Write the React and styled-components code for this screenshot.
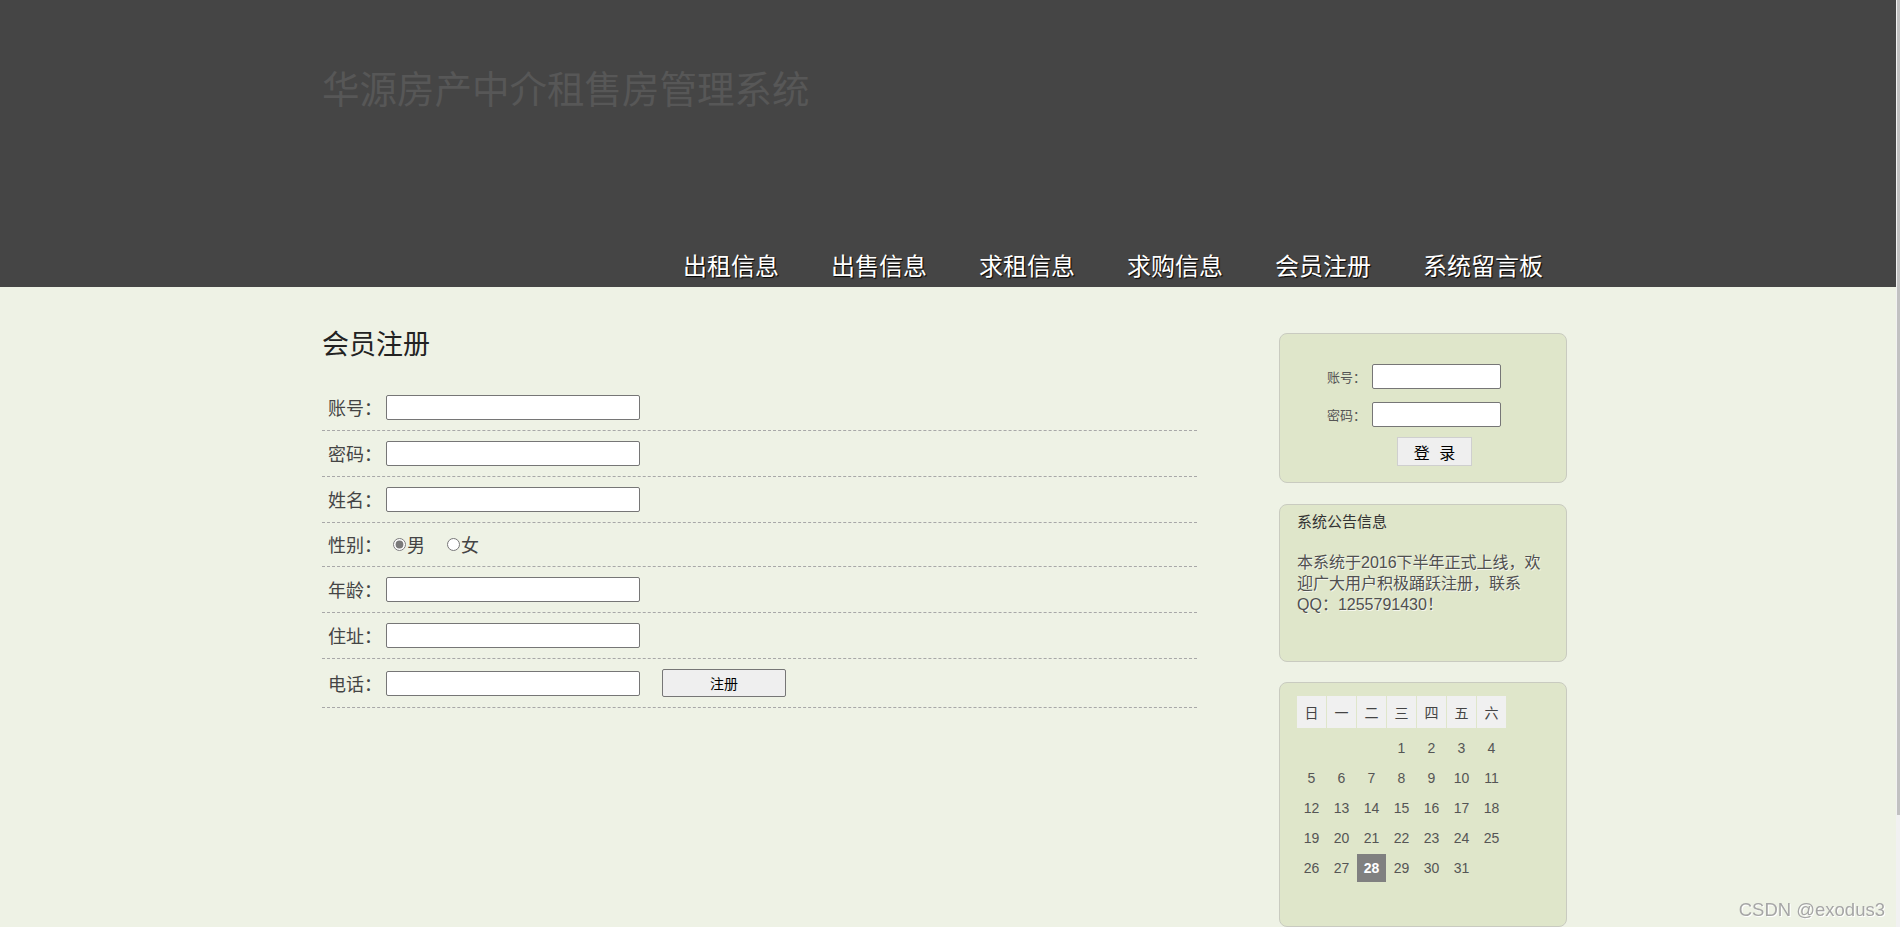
import styled, { createGlobalStyle } from "styled-components";

const CJK = `"Noto Sans CJK SC", "Liberation Sans", sans-serif`;
const MIXED = `"Liberation Sans", "Noto Sans CJK SC", sans-serif`;

const navItems = ["出租信息", "出售信息", "求租信息", "求购信息", "会员注册", "系统留言板"];
const weekDays = ["日", "一", "二", "三", "四", "五", "六"];
const firstWeekday = 3;
const today = 28;

export default function App() {
  const days = [];
  for (let i = 0; i < firstWeekday; i++) days.push(null);
  for (let d = 1; d <= 31; d++) days.push(d);

  return (
    <>
      <GlobalStyle />
      <Header>
        <HeaderInner>
          <SiteTitle>华源房产中介租售房管理系统</SiteTitle>
          <Nav>
            {navItems.map((item) => (
              <NavLink key={item} href="#">
                {item}
              </NavLink>
            ))}
          </Nav>
        </HeaderInner>
      </Header>

      <Content>
        <Main>
          <PageTitle>会员注册</PageTitle>
          <FormRow>
            <Label>账号：</Label>
            <TextInput type="text" />
          </FormRow>
          <FormRow>
            <Label>密码：</Label>
            <TextInput type="password" />
          </FormRow>
          <FormRow>
            <Label>姓名：</Label>
            <TextInput type="text" />
          </FormRow>
          <FormRow>
            <Label>性别：</Label>
            <Radio type="radio" name="sex" defaultChecked $first />
            <RadioText>男</RadioText>
            <Radio type="radio" name="sex" />
            <RadioText>女</RadioText>
          </FormRow>
          <FormRow>
            <Label>年龄：</Label>
            <TextInput type="text" />
          </FormRow>
          <FormRow>
            <Label>住址：</Label>
            <TextInput type="text" />
          </FormRow>
          <FormRow>
            <Label>电话：</Label>
            <TextInput type="text" />
            <SubmitButton type="button">注册</SubmitButton>
          </FormRow>
        </Main>

        <Sidebar>
          <LoginBox>
            <LoginRow>
              <SmallLabel>账号：</SmallLabel>
              <SmallInput type="text" />
            </LoginRow>
            <LoginRow>
              <SmallLabel>密码：</SmallLabel>
              <SmallInput type="password" />
            </LoginRow>
            <LoginActions>
              <LoginButton type="button">登 录</LoginButton>
            </LoginActions>
          </LoginBox>

          <NoticeBox>
            <NoticeTitle>系统公告信息</NoticeTitle>
            <NoticeText>本系统于2016下半年正式上线，欢迎广大用户积极踊跃注册，联系QQ：1255791430！</NoticeText>
          </NoticeBox>

          <CalendarBox>
            <WeekHeader>
              {weekDays.map((w) => (
                <WeekCell key={w}>{w}</WeekCell>
              ))}
            </WeekHeader>
            <DayGrid>
              {days.map((d, i) => (
                <DayCell key={i} $today={d === today}>
                  {d}
                </DayCell>
              ))}
            </DayGrid>
          </CalendarBox>
        </Sidebar>
      </Content>

      <Watermark>CSDN @exodus3</Watermark>
      <ScrollTrack>
        <ScrollThumb />
      </ScrollTrack>
    </>
  );
}

const GlobalStyle = createGlobalStyle`
  body {
    margin: 0;
    background: #eef2e5;
    font-family: ${CJK};
  }
`;

const Header = styled.header`
  background: #454545;
`;

const HeaderInner = styled.div`
  width: 1256px;
  height: 287px;
  margin: 0 auto;
  display: flex;
  flex-direction: column;
`;

const SiteTitle = styled.h1`
  margin: 0;
  padding-top: 64px;
  font-size: 37.5px;
  line-height: 46px;
  font-weight: normal;
  color: #575757;
`;

const Nav = styled.nav`
  margin-top: auto;
  display: flex;
  justify-content: flex-end;
  gap: 52px;
  padding: 0 35px 6px 0;
`;

const NavLink = styled.a`
  color: #fff;
  font-size: 24px;
  line-height: 32px;
  text-decoration: none;
  text-shadow: 1px 1px 1px #000;
`;

const Content = styled.div`
  width: 1256px;
  margin: 0 auto;
  display: flex;
  justify-content: space-between;
  align-items: flex-start;
`;

const Main = styled.div`
  width: 875px;
  padding-top: 38px;
`;

const PageTitle = styled.h2`
  margin: 0 0 24px;
  font-size: 27px;
  line-height: 36px;
  font-weight: normal;
  color: #222;
`;

const FormRow = styled.div`
  display: flex;
  align-items: center;
  padding: 10px 0 10px 6px;
  border-bottom: 1px dashed #a8a8a8;
`;

const Label = styled.span`
  font-size: 18px;
  line-height: 23px;
  color: #444;
`;

const TextInput = styled.input`
  box-sizing: border-box;
  width: 254px;
  height: 25px;
  margin: 0 0 0 4px;
  padding: 1px 2px;
  border: 1px solid #767676;
  border-radius: 2px;
  background: #fff;
`;

const Radio = styled.input`
  width: 13px;
  height: 13px;
  margin: 0 1px 0 ${(p) => (p.$first ? "11px" : "22px")};
  accent-color: #7a7a7a;
`;

const RadioText = styled.span`
  font-size: 18px;
  line-height: 23px;
  color: #444;
`;

const SubmitButton = styled.button`
  margin-left: 22px;
  width: 124px;
  height: 28px;
  font-family: ${CJK};
  font-size: 14px;
  color: #000;
  background: #efefef;
  border: 1px solid #767676;
  border-radius: 2px;
`;

const Sidebar = styled.aside`
  width: 288px;
  margin: 46px 11px 0 0;
  display: flex;
  flex-direction: column;
`;

const Box = styled.div`
  box-sizing: border-box;
  background: #dfe6ca;
  border: 1px solid #c9cbc0;
  border-radius: 8px;
`;

const LoginBox = styled(Box)`
  height: 150px;
  padding: 30px 0 0 47px;
  display: flex;
  flex-direction: column;
  gap: 13px;
`;

const LoginRow = styled.div`
  display: flex;
  align-items: center;
  gap: 6px;
`;

const SmallLabel = styled.span`
  font-size: 13px;
  line-height: 25px;
  color: #555;
`;

const SmallInput = styled.input`
  box-sizing: border-box;
  width: 129px;
  height: 25px;
  margin: 0;
  border: 1px solid #767676;
  border-radius: 2px;
  background: #fff;
`;

const LoginActions = styled.div`
  margin-top: -3px;
  padding-left: 70px;
`;

const LoginButton = styled.button`
  width: 75px;
  height: 29px;
  padding: 0 0 0 3px;
  font-family: ${CJK};
  font-size: 16px;
  letter-spacing: 3px;
  color: #000;
  background: #efefef;
  border: 1px solid #cfcfcf;
`;

const NoticeBox = styled(Box)`
  height: 158px;
  margin-top: 21px;
  padding: 6px 18px 0 17px;
`;

const NoticeTitle = styled.div`
  font-size: 15px;
  line-height: 20px;
  color: #333;
`;

const NoticeText = styled.p`
  margin: 21px 0 0;
  font-family: ${MIXED};
  font-size: 16px;
  line-height: 21px;
  color: #505050;
  text-shadow: 1px 1px 0 rgba(255, 255, 255, 0.7);
`;

const CalendarBox = styled(Box)`
  height: 245px;
  margin-top: 20px;
  padding: 13px 17px;
`;

const WeekHeader = styled.div`
  display: grid;
  grid-template-columns: repeat(7, 29px);
  gap: 1px;
`;

const WeekCell = styled.div`
  height: 32px;
  line-height: 32px;
  text-align: center;
  background: #f0f0f0;
  font-size: 14px;
  color: #444;
`;

const DayGrid = styled.div`
  margin-top: 6px;
  display: grid;
  grid-template-columns: repeat(7, 29px);
  grid-auto-rows: 28px;
  gap: 2px 1px;
`;

const DayCell = styled.div`
  line-height: 28px;
  text-align: center;
  font-family: ${MIXED};
  font-size: 14px;
  color: ${(p) => (p.$today ? "#fff" : "#555")};
  background: ${(p) => (p.$today ? "#808080" : "transparent")};
  font-weight: ${(p) => (p.$today ? "bold" : "normal")};
`;

const Watermark = styled.div`
  position: fixed;
  right: 15px;
  bottom: 7px;
  font-family: "Liberation Sans", sans-serif;
  font-size: 18.5px;
  line-height: 20px;
  color: #a6a6a6;
  text-shadow: 1px 1px 0 #fff;
`;

const ScrollTrack = styled.div`
  position: fixed;
  top: 0;
  right: 0;
  bottom: 0;
  width: 4px;
  background: #f1f1f1;
`;

const ScrollThumb = styled.div`
  width: 3px;
  height: 815px;
  margin-left: 1px;
  background: #c1c1c1;
`;
